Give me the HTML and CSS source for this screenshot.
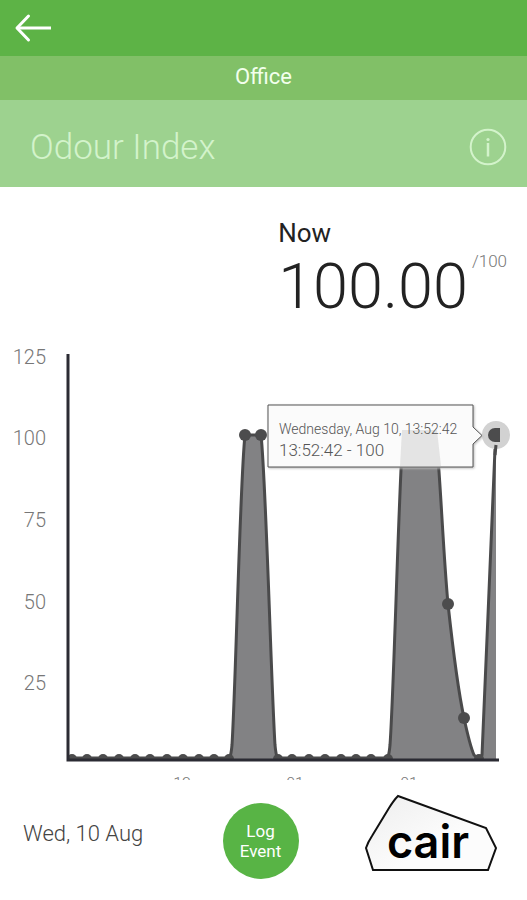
FILE: index.html
```html
<!DOCTYPE html>
<html lang="en">
<head>
  <meta charset="utf-8">
  <meta name="viewport" content="width=device-width, initial-scale=1">
  <title>Odour Index</title>
  <link rel="stylesheet" href="styles.css">
</head>
<body>
  <header class="topbar">
    <button class="icon-button" type="button" aria-label="Back">
      <svg width="38" height="30" viewBox="0 0 38 30" fill="none" stroke="#fff" stroke-width="3" stroke-linecap="round" stroke-linejoin="round">
        <path d="M14.500 3 3 15l11.500 12"/>
        <path d="M4 15h33" stroke-linecap="butt"/>
      </svg>
    </button>
  </header>
  <div class="room">Office</div>
  <div class="title-bar">
    <h1 class="title">Odour Index</h1>
    <button class="icon-button" type="button" aria-label="About this index">
      <svg width="38" height="38" viewBox="0 0 38 38" fill="none" stroke="#d3f3cb" stroke-width="2">
        <circle cx="19" cy="19" r="17.3"/>
        <path d="M19 15v13.500" stroke-width="2.500"/>
        <circle cx="19" cy="11.500" r="1.600" fill="#d3f3cb" stroke="none"/>
      </svg>
    </button>
  </div>
  <main>
    <section class="reading">
      <div>
        <h2 class="reading-label">Now</h2>
        <p class="reading-value">100.00</p>
      </div>
      <span class="reading-max">/100</span>
    </section>

    <svg class="chart" viewBox="0 340 527 440" role="img" aria-label="Odour index over time">
      <defs>
        <clipPath id="plot"><path d="M66 340H527V761H66Z"/></clipPath>
      </defs>
      <g class="y-labels">
        <text x="46" y="364">125</text>
        <text x="46" y="445">100</text>
        <text x="46" y="527">75</text>
        <text x="46" y="609">50</text>
        <text x="46" y="690">25</text>
      </g>
      <g class="x-labels">
        <text x="182" y="789">12</text>
        <text x="295" y="789">01</text>
        <text x="409" y="789">01</text>
      </g>
      <path class="area" d="M231 759C235 720 240 480 245 435H261C266 480 271 720 276 759ZM389 759C394 720 399 480 403 435H436C440 470 443 550 448 604C453 650 458 690 464 718C468 735 472 750 477 759ZM481 759C486 680 492 500 496 435V759Z"/>
      <path class="line" d="M70 758H226C231 758 231 754 232 745C236 680 240 480 245 435H261C266 480 271 680 275 745C276 754 276 758 281 758H384C389 758 389 754 390 745C394 690 399 480 403 435H436C440 470 443 550 448 604C453 650 458 690 464 718C467 732 471 748 474 755Q479 760 482 755C486 680 492 500 495 449"/>
      <g class="dots" clip-path="url(#plot)">
        <circle cx="72" cy="759" r="5"/><circle cx="87" cy="759" r="5"/><circle cx="103" cy="759" r="5"/>
        <circle cx="119" cy="759" r="5"/><circle cx="135" cy="759" r="5"/><circle cx="150" cy="759" r="5"/>
        <circle cx="167" cy="759" r="5"/><circle cx="183" cy="759" r="5"/><circle cx="199" cy="759" r="5"/>
        <circle cx="214" cy="759" r="5"/><circle cx="229" cy="759" r="5"/>
        <circle cx="245" cy="435" r="6"/><circle cx="261" cy="435" r="6"/>
        <circle cx="278" cy="759" r="5"/><circle cx="292" cy="759" r="5"/><circle cx="309" cy="759" r="5"/>
        <circle cx="325" cy="759" r="5"/><circle cx="341" cy="759" r="5"/><circle cx="356" cy="759" r="5"/>
        <circle cx="371" cy="759" r="5"/><circle cx="388" cy="759" r="5"/>
        <circle cx="448" cy="604" r="6"/><circle cx="464" cy="718" r="6"/><circle cx="479" cy="759" r="5"/>
      </g>
      <path class="axis" d="M68 354V760H499"/>
      <circle class="halo" cx="496" cy="435" r="14"/>
      <path class="line" d="M496 445 495 455"/>
      <path class="active-dot" d="M500 428H495A7 7 0 0 0 495 442H500Z"/>
      <path class="tooltip-box" d="M268 405H473V427L482 435.500L473 444V467H268Z"/>
      <path class="ghost" d="M400 466 402 430H437L441 466Z"/>
      <g class="tooltip-text">
        <text class="tooltip-date" x="279" y="434">Wednesday, Aug 10, 13:52:42</text>
        <text class="tooltip-value" x="279" y="456">13:52:42 - 100</text>
      </g>
    </svg>
  </main>

  <footer class="footer">
    <time class="date">Wed, 10 Aug</time>
    <button class="log-button" type="button">Log<br>Event</button>
    <svg class="logo" width="134" height="78" viewBox="0 0 134 78" role="img" aria-label="cair">
      <defs>
        <linearGradient id="shade" x1="0" y1="0" x2="1" y2="1">
          <stop offset="0" stop-color="#eee"/>
          <stop offset="0.600" stop-color="#fcfcfc"/>
        </linearGradient>
      </defs>
      <path d="M34 2 122 34 132 54 124 76H9L2 54Q4 48 8 42L25 14Q30 6 34 2Z" fill="url(#shade)" stroke="#111" stroke-width="2"/>
      <text class="logo-text" x="64" y="64">cair</text>
    </svg>
  </footer>
</body>
</html>
```
FILE: styles.css
```css
* {
  box-sizing: border-box;
}

body {
  margin: 0;
  background: #fff;
  color: #222;
  font-family: Roboto, "Liberation Sans", sans-serif;
  font-weight: 300;
}

h1,
h2,
p {
  margin: 0;
  font-weight: 300;
}

button {
  border: 0;
  padding: 0;
  font: inherit;
  cursor: pointer;
}

svg {
  display: block;
}

.icon-button {
  background: none;
}

.topbar {
  display: flex;
  align-items: center;
  height: 56px;
  padding: 0 14px;
  background: #5db346;
}

.room {
  padding: 7px 0 9px;
  background: #81c067;
  color: #f2ffec;
  font-size: 22px;
  font-weight: 400;
  line-height: 28px;
  text-align: center;
}

.title-bar {
  display: flex;
  align-items: center;
  justify-content: space-between;
  height: 87px;
  padding: 7px 20px 0 30px;
  background: #9dd28f;
}

.title {
  color: #d3f3cb;
  font-size: 35px;
}

.reading {
  display: flex;
  justify-content: flex-end;
  gap: 4px;
  padding: 30px 20px 17px;
}

.reading-label {
  font-size: 26px;
  font-weight: 400;
  line-height: 32px;
}

.reading-value {
  padding-top: 2px;
  font-size: 63px;
  line-height: 72px;
}

.reading-max {
  padding-top: 34px;
  color: #777;
  font-size: 17px;
  line-height: 20px;
}

.chart {
  width: 100%;
}

.y-labels {
  fill: #777;
  font-size: 20px;
  text-anchor: end;
}

.x-labels {
  fill: #777;
  font-size: 16px;
  text-anchor: middle;
}

.area {
  fill: #828284;
}

.line {
  fill: none;
  stroke: #4a4a4b;
  stroke-width: 3;
}

.dots,
.active-dot {
  fill: #4c4c4d;
}

.axis {
  fill: none;
  stroke: #2b2b33;
  stroke-width: 3;
}

.halo {
  fill: #d2d2d2;
}

.tooltip-box {
  fill: #fbfbfb;
  stroke: #555;
  filter: drop-shadow(1px 1px 1px #bbb);
}

.ghost {
  fill: #e4e4e4;
}

.tooltip-text {
  fill: #555;
}

.tooltip-date {
  font-size: 14px;
}

.tooltip-value {
  font-size: 17px;
}

.footer {
  display: grid;
  grid-template-columns: 1fr auto 1fr;
  align-items: start;
  padding: 14px 29px 20px 23px;
}

.date {
  padding-top: 26px;
  color: #444;
  font-size: 22px;
  line-height: 28px;
}

.log-button {
  width: 76px;
  height: 76px;
  margin-top: 9px;
  border-radius: 50%;
  background: #58b445;
  color: #fff;
  font-size: 17px;
  font-weight: 400;
  line-height: 20px;
}

.logo {
  justify-self: end;
}

.logo-text {
  fill: #000;
  font-family: Inter, Roboto, sans-serif;
  font-size: 45px;
  font-weight: 600;
  text-anchor: middle;
}
```
